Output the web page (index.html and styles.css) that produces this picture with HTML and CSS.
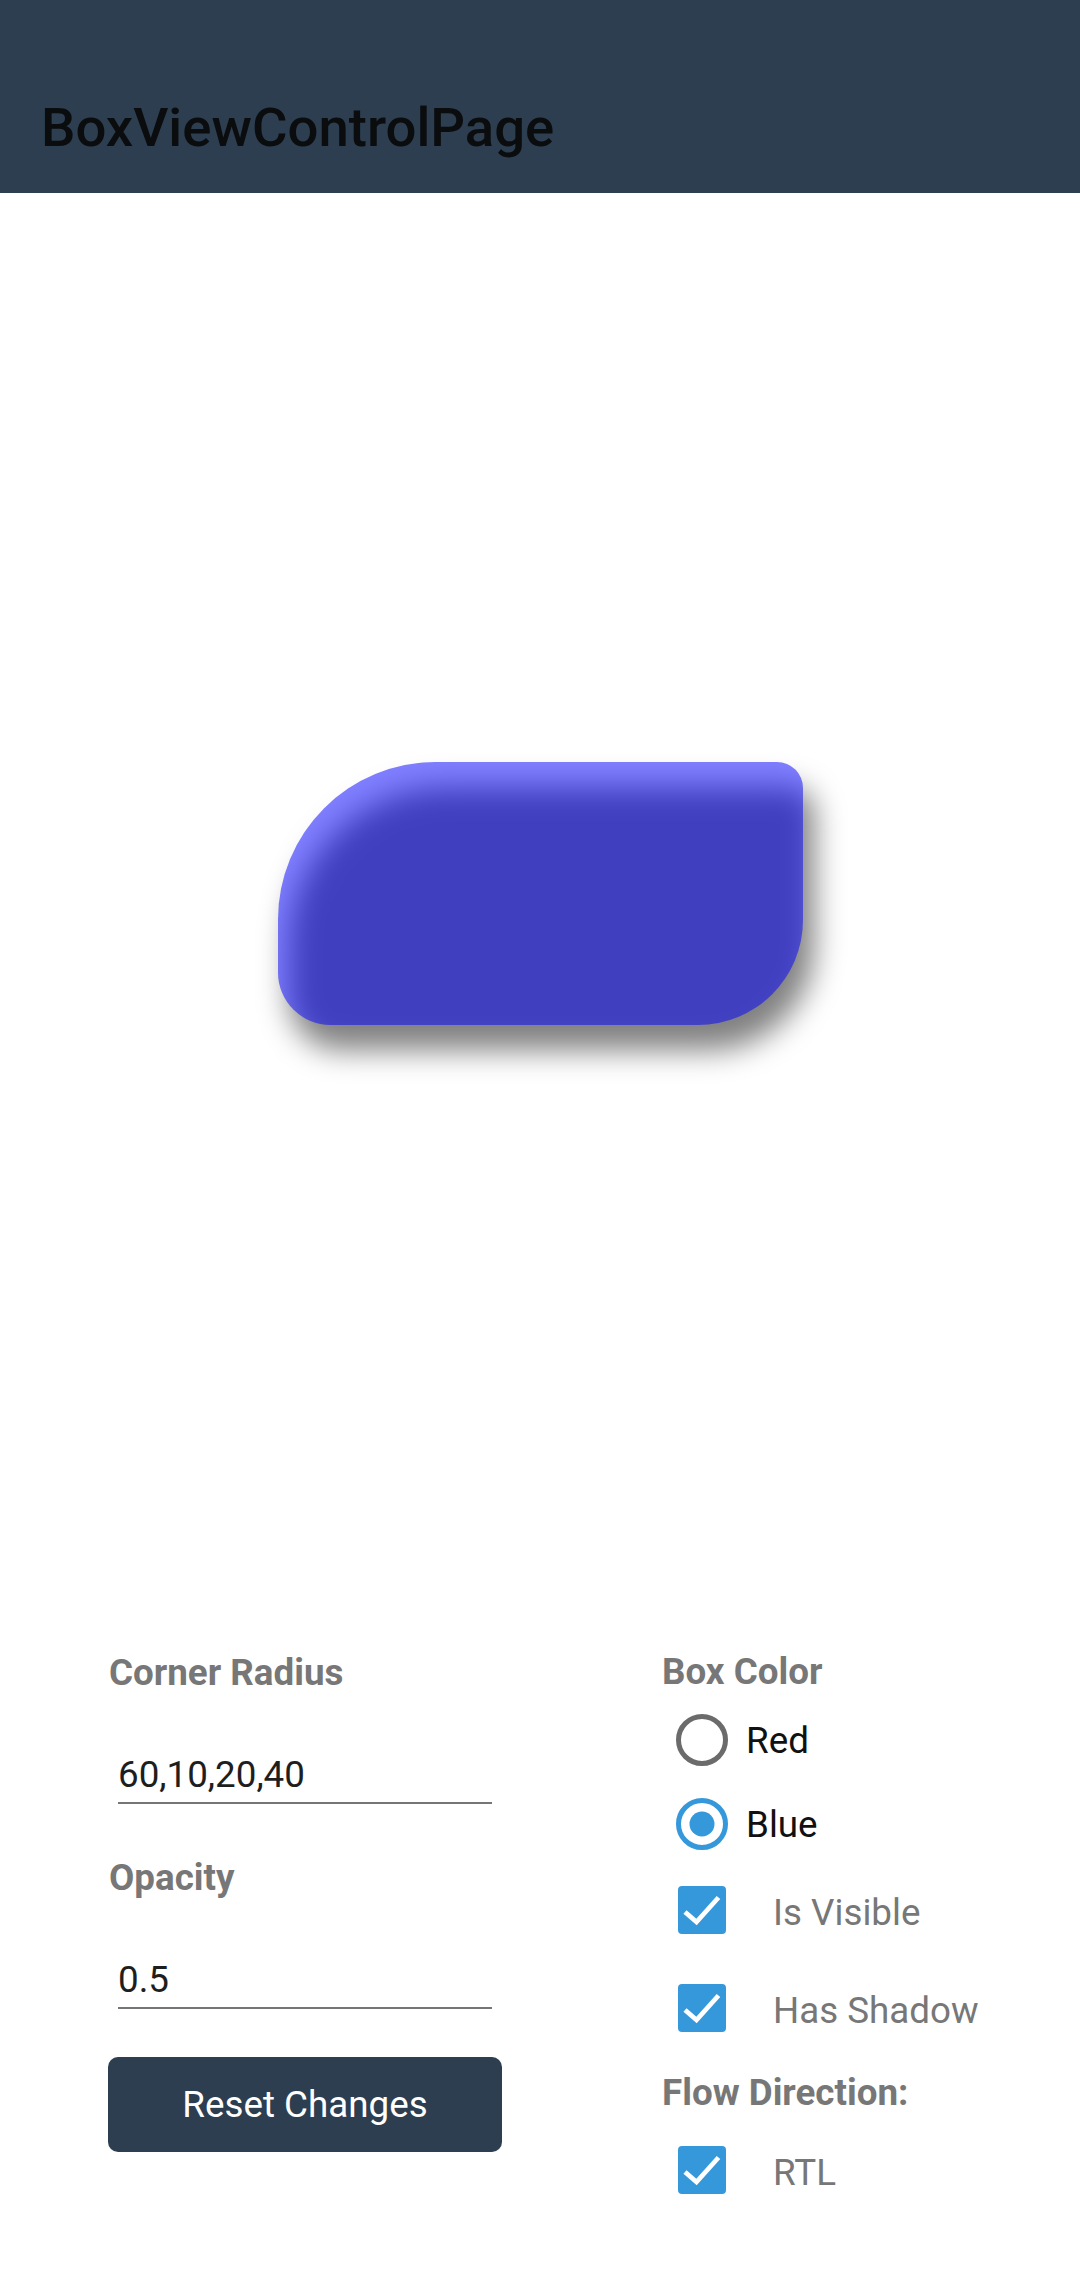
FILE: index.html
```html
<!DOCTYPE html>
<html>
<head>
<meta charset="utf-8">
<link rel="stylesheet" href="styles.css">
</head>
<body>
<header class="appbar">
  <h1 class="title">BoxViewControlPage</h1>
</header>
<main>
  <section class="preview">
    <div class="box-wrap">
      <div class="box-shadow"></div>
      <div class="box"></div>
    </div>
  </section>
  <section class="controls">
    <div class="col col-left">
      <div class="label label-first">Corner Radius</div>
      <div class="entry">60,10,20,40</div>
      <div class="label label-next">Opacity</div>
      <div class="entry">0.5</div>
      <button class="reset">Reset Changes</button>
    </div>
    <div class="col col-right">
      <div class="label label-box">Box Color</div>
      <div class="radio radio-first">
        <svg class="radio-icon" width="52" height="52" viewBox="0 0 52 52"><circle cx="26" cy="26" r="23.5" fill="none" stroke="#6b6b6b" stroke-width="5"/></svg>
        <span class="radio-text">Red</span>
      </div>
      <div class="radio">
        <svg class="radio-icon" width="52" height="52" viewBox="0 0 52 52"><circle cx="26" cy="26" r="23.5" fill="none" stroke="#3598db" stroke-width="5"/><circle cx="26" cy="26" r="12.5" fill="#3598db"/></svg>
        <span class="radio-text">Blue</span>
      </div>
      <div class="check">
        <svg class="check-icon" width="48" height="48" viewBox="0 0 48 48"><rect x="0" y="0" width="48" height="48" rx="4" fill="#3598db"/><polyline points="7,26 18.5,36 40.5,11.5" fill="none" stroke="#fff" stroke-width="4.8"/></svg>
        <span class="check-text">Is Visible</span>
      </div>
      <div class="check check-gap">
        <svg class="check-icon" width="48" height="48" viewBox="0 0 48 48"><rect x="0" y="0" width="48" height="48" rx="4" fill="#3598db"/><polyline points="7,26 18.5,36 40.5,11.5" fill="none" stroke="#fff" stroke-width="4.8"/></svg>
        <span class="check-text">Has Shadow</span>
      </div>
      <div class="label label-flow">Flow Direction:</div>
      <div class="check check-rtl">
        <svg class="check-icon" width="48" height="48" viewBox="0 0 48 48"><rect x="0" y="0" width="48" height="48" rx="4" fill="#3598db"/><polyline points="7,26 18.5,36 40.5,11.5" fill="none" stroke="#fff" stroke-width="4.8"/></svg>
        <span class="check-text">RTL</span>
      </div>
    </div>
  </section>
</main>
</body>
</html>
```

FILE: styles.css
```css
* { box-sizing: border-box; }
html, body {
  margin: 0;
  padding: 0;
  background: #ffffff;
  font-family: Roboto, "Noto Sans", sans-serif;
}
body {
  width: 1080px;
  height: 2289px;
  overflow: hidden;
}
.appbar {
  height: 193px;
  background: #2c3e50;
  padding: 95px 0 0 41px;
}
.title {
  margin: 0;
  font-family: Roboto, sans-serif;
  font-weight: 500;
  font-size: 54.5px;
  line-height: 64px;
  color: #0a0c0e;
}
.preview {
  height: 1401px;
  display: flex;
  align-items: center;
  justify-content: center;
}
.box-wrap {
  position: relative;
  width: 525px;
  height: 262.5px;
}
.box-shadow {
  position: absolute;
  inset: 0;
  border-radius: 157.5px 26px 105px 52.5px;
  background: rgba(0, 0, 0, 0.5);
  transform: translate(11px, 25px);
  filter: blur(15px);
}
.box {
  position: absolute;
  inset: 0;
  border-radius: 157.5px 26px 105px 52.5px;
  background: rgba(0, 0, 255, 0.5);
}
.controls {
  display: flex;
  padding-left: 108px;
  gap: 160px;
}
.col-left {
  width: 394px;
  display: flex;
  flex-direction: column;
}
.col-right {
  width: 380px;
  display: flex;
  flex-direction: column;
}
.label {
  font-weight: 700;
  font-size: 36.75px;
  line-height: 43px;
  height: 43px;
  color: #777777;
  padding-left: 1px;
}
.label-first { margin-top: 57px; }
.label-next { margin-top: 52px; }
.label-box { margin-top: 56px; padding-left: 0; }
.label-flow { margin-top: 19px; padding-left: 0; }
.entry {
  margin: 59px 10px 0 10px;
  font-size: 36.75px;
  line-height: 43px;
  color: #1e1e1e;
  padding-bottom: 6px;
  border-bottom: 2px solid #767676;
}
.reset {
  margin-top: 48px;
  height: 95px;
  width: 394px;
  border: none;
  border-radius: 10px;
  background: #2c3e50;
  color: #ffffff;
  font-family: Roboto, sans-serif;
  font-size: 36.75px;
  font-weight: 400;
  padding: 0;
}
.radio {
  height: 84px;
  display: flex;
  align-items: center;
  padding-left: 14px;
  gap: 18px;
}
.radio-first { margin-top: 5px; }
.radio-icon { display: block; flex: none; }
.radio-text {
  font-size: 36.75px;
  line-height: 43px;
  color: #111111;
}
.check {
  height: 88px;
  display: flex;
  align-items: center;
  padding-left: 16px;
  gap: 47px;
}
.check-gap { margin-top: 10px; }
.check-rtl { margin-top: 12px; }
.check-icon { display: block; flex: none; }
.check-text {
  font-size: 36.75px;
  line-height: 43px;
  color: #777777;
  padding-top: 4px;
}
```
